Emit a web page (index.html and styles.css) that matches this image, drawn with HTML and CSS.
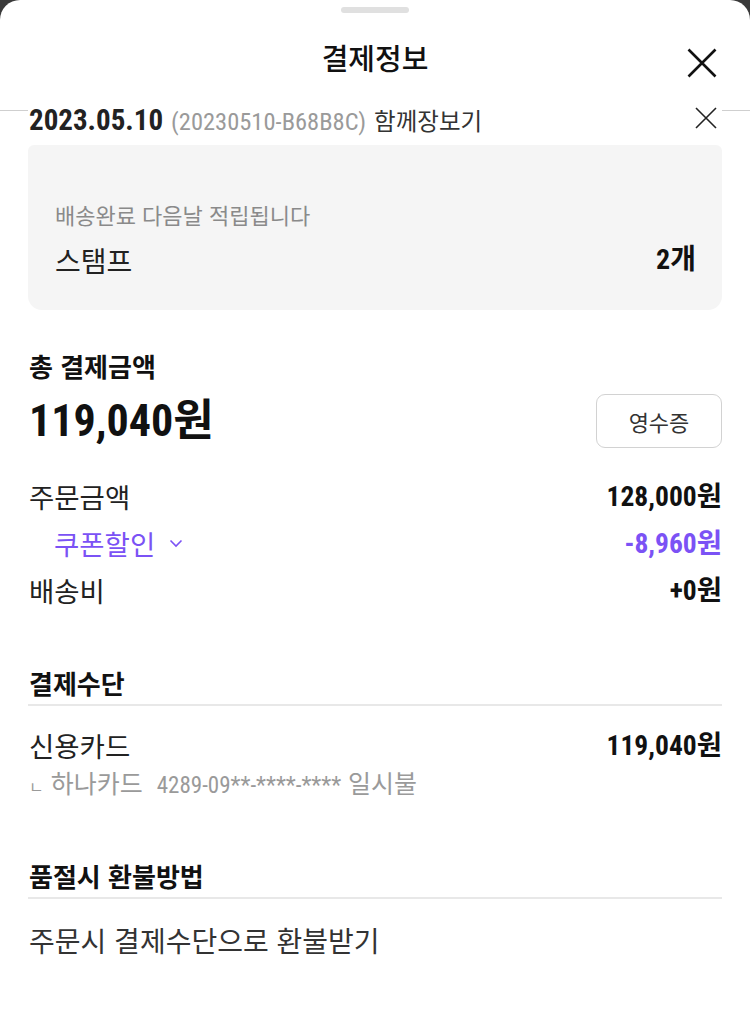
FILE: index.html
```html
<!DOCTYPE html>
<html lang="ko">
<head>
<meta charset="utf-8">
<title>결제정보</title>
<link rel="stylesheet" href="styles.css">
</head>
<body>
<div class="sheet">
  <header class="sheet-header">
    <div class="handle"></div>
    <div class="title-row">
      <h1 class="title">결제정보</h1>
      <button class="close-btn" aria-label="닫기">
        <svg width="30" height="30" viewBox="0 0 30 30"><path d="M1.5 1.5 L28.5 28.5 M28.5 1.5 L1.5 28.5" stroke="#111" stroke-width="2.6" fill="none"/></svg>
      </button>
    </div>
  </header>

  <div class="content">
    <div class="order-row">
      <div class="order-info">
        <span class="order-date num">2023.05.10</span>
        <span class="order-no num">(20230510-B68B8C)</span>
        <span class="order-type">함께장보기</span>
      </div>
      <svg class="order-close" width="22" height="22" viewBox="0 0 22 22"><path d="M1 1 L21 21 M21 1 L1 21" stroke="#222" stroke-width="1.6" fill="none"/></svg>
    </div>

    <div class="stamp-box">
      <p class="stamp-note">배송완료 다음날 적립됩니다</p>
      <div class="stamp-row">
        <span class="stamp-label">스탬프</span>
        <span class="stamp-count num">2개</span>
      </div>
    </div>

    <section class="total">
      <h2 class="section-title">총 결제금액</h2>
      <div class="total-row">
        <span class="total-amount num">119,040원</span>
        <button class="receipt-btn">영수증</button>
      </div>
    </section>

    <div class="price-list">
      <div class="price-row">
        <span class="price-label">주문금액</span>
        <span class="price-value num">128,000원</span>
      </div>
      <div class="price-row coupon">
        <span class="price-label coupon-label">쿠폰할인
          <svg class="chev" width="14" height="9" viewBox="0 0 14 9"><path d="M1.5 1.5 L7 7 L12.5 1.5" stroke="#7b52f5" stroke-width="1.6" fill="none"/></svg>
        </span>
        <span class="price-value num">-8,960원</span>
      </div>
      <div class="price-row">
        <span class="price-label">배송비</span>
        <span class="price-value num">+0원</span>
      </div>
    </div>

    <section class="pay-method">
      <h2 class="section-title underlined">결제수단</h2>
      <div class="card-row">
        <span class="price-label">신용카드</span>
        <span class="price-value num">119,040원</span>
      </div>
      <p class="card-detail"><span class="sub-mark">ㄴ</span> 하나카드&nbsp; <span class="num card-no">4289-09**-****-****</span> 일시불</p>
    </section>

    <section class="refund">
      <h2 class="section-title underlined">품절시 환불방법</h2>
      <p class="refund-text">주문시 결제수단으로 환불받기</p>
    </section>
  </div>
</div>
</body>
</html>
```

FILE: styles.css
```css
* { box-sizing: border-box; }

html, body {
  margin: 0;
  padding: 0;
}

body {
  background: #3a3a3a;
  font-family: "Noto Sans CJK KR", "Noto Sans", sans-serif;
  color: #222;
  width: 750px;
  height: 1034px;
  overflow: hidden;
}

.num {
  font-family: "Roboto Condensed", "Roboto", "Noto Sans CJK KR", sans-serif;
}

.sheet {
  background: #fff;
  border-radius: 20px 20px 0 0;
  height: 1034px;
}

.sheet-header {
  border-bottom: 1px solid #cfcfcf;
  height: 111px;
  display: flex;
  flex-direction: column;
  align-items: center;
  padding-top: 7px;
}

.handle {
  width: 68px;
  height: 6px;
  border-radius: 3px;
  background: #e0e0e0;
}

.title-row {
  width: 100%;
  position: relative;
  display: flex;
  justify-content: center;
  margin-top: 26px;
}

.title {
  margin: 0;
  font-size: 29px;
  font-weight: 500;
  line-height: 36px;
  color: #111;
}

.close-btn {
  position: absolute;
  right: 33px;
  top: 9px;
  padding: 0;
  border: 0;
  background: none;
  width: 30px;
  height: 30px;
}

.close-btn svg { display: block; }

.content {
  padding: 0 28px;
}

.order-row {
  position: relative;
  background: #fff;
  margin-top: -11px;
  height: 40px;
  display: flex;
  align-items: center;
  justify-content: space-between;
}

.order-info {
  display: flex;
  align-items: baseline;
  gap: 8px;
  padding-left: 1px;
  line-height: 1;
}

.order-date {
  font-size: 29px;
  font-weight: 700;
  color: #222;
}

.order-no {
  font-size: 24.5px;
  color: #9a9a9a;
}

.order-type {
  font-size: 23.5px;
  color: #333;
}

.order-close {
  margin-right: 5px;
  margin-top: -4px;
}

.stamp-box {
  margin-top: 5px;
  background: #f5f5f5;
  border-radius: 6px 6px 14px 14px;
  height: 165px;
  padding: 55px 26px 0 27px;
}

.stamp-note {
  margin: 0;
  font-size: 22px;
  line-height: 28px;
  color: #8a8a8a;
}

.stamp-row {
  margin-top: 15px;
  height: 34px;
  display: flex;
  justify-content: space-between;
  align-items: center;
  line-height: 1;
}

.stamp-label {
  font-size: 28px;
  color: #222;
}

.stamp-count {
  font-size: 28px;
  font-weight: 700;
  color: #111;
}

.total {
  margin-top: 40px;
}

.section-title {
  margin: 0;
  font-size: 26px;
  font-weight: 700;
  line-height: 32px;
  color: #111;
  padding-left: 1px;
}

.total-row {
  margin-top: 12px;
  height: 54px;
  display: flex;
  justify-content: space-between;
  align-items: center;
}

.total-amount {
  font-size: 44px;
  font-weight: 700;
  line-height: 1;
  color: #111;
  padding-left: 1px;
}

.receipt-btn {
  width: 126px;
  height: 54px;
  border: 1px solid #d2d2d2;
  border-radius: 9px;
  background: #fff;
  font-family: "Noto Sans CJK KR", sans-serif;
  font-size: 22px;
  color: #333;
  padding: 0;
}

.price-list {
  margin-top: 25px;
}

.price-row {
  height: 47px;
  display: flex;
  justify-content: space-between;
  align-items: center;
  line-height: 1;
}

.price-label {
  font-size: 27.5px;
  color: #222;
  padding-left: 1px;
}

.price-value {
  font-size: 27.5px;
  font-weight: 700;
  color: #111;
}

.coupon .coupon-label {
  color: #7b52f5;
  padding-left: 26px;
  display: flex;
  align-items: center;
  gap: 14px;
}

.coupon .price-value {
  color: #7b52f5;
}

.pay-method {
  margin-top: 53px;
}

.underlined {
  padding-bottom: 5px;
  border-bottom: 2px solid #e8e8e8;
}

.card-row {
  margin-top: 20px;
  height: 40px;
  display: flex;
  justify-content: space-between;
  align-items: center;
  line-height: 1;
}

.card-detail {
  margin: 1px 0 0;
  font-size: 25px;
  line-height: 30px;
  color: #9a9a9a;
  padding-left: 1px;
}

.sub-mark {
  font-size: 16px;
}

.card-no {
  font-size: 23px;
}

.refund {
  margin-top: 59px;
}

.refund-text {
  margin: 24px 0 0;
  font-size: 28px;
  line-height: 34px;
  color: #333;
  padding-left: 1px;
}
```
